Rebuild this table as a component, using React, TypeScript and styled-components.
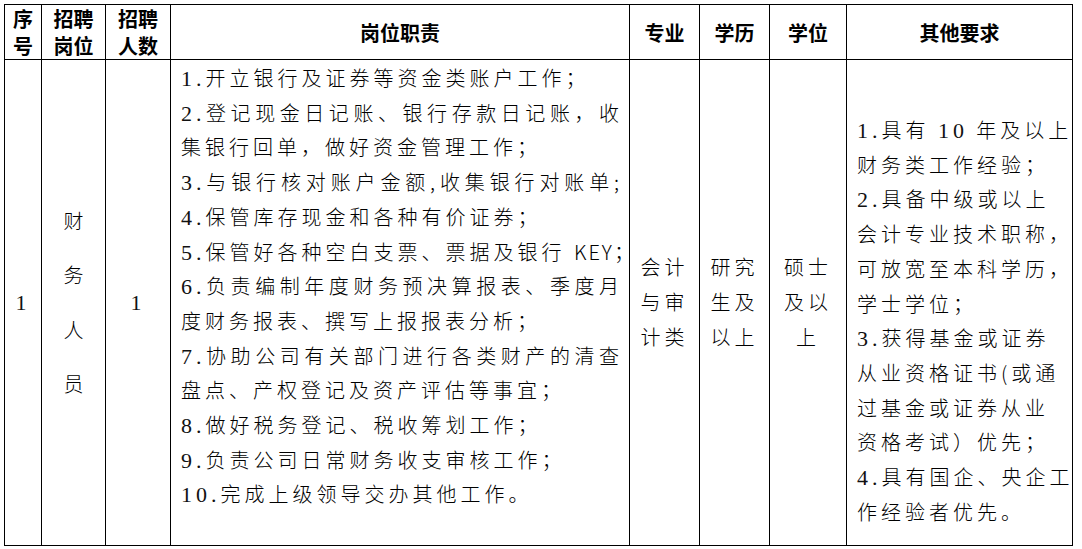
import React from 'react'
import styled, { createGlobalStyle } from 'styled-components'

const GlobalStyle = createGlobalStyle`
  * { box-sizing: border-box; }
  html, body {
    margin: 0;
    padding: 0;
    background: #fff;
  }
  body {
    font-family: "Noto Sans CJK SC", sans-serif;
    color: #000;
  }
`

const Table = styled.div`
  display: grid;
  grid-template-columns: 37px 64px 65px 459px 70px 70px 77px 226px;
  grid-template-rows: 55px 486px;
  width: max-content;
  margin: 4px 0 0 4px;
  border-top: 1px solid #000;
  border-left: 1px solid #000;
`

const Cell = styled.div<{ $top?: boolean; $pad?: string }>`
  display: flex;
  flex-direction: column;
  justify-content: ${p => (p.$top ? 'flex-start' : 'center')};
  padding: ${p => p.$pad || '0'};
  border-right: 1px solid #000;
  border-bottom: 1px solid #000;
  overflow: visible;
`

const HeadCell = styled(Cell)`
  align-items: center;
  font-size: 20px;
  font-weight: 700;
  line-height: 27px;
  text-align: center;
`

const TextBlock = styled.div<{ $center?: boolean; $lh?: number; $spacing?: number }>`
  font-size: 20px;
  font-weight: 300;
  line-height: ${p => p.$lh || 34.7}px;
  letter-spacing: ${p => (p.$spacing ?? 4)}px;
  text-align: ${p => (p.$center ? 'center' : 'left')};
`

const Line = styled.div<{ $justify?: boolean }>`
  white-space: nowrap;
  text-align-last: ${p => (p.$justify ? 'justify' : 'auto')};
`

// digits and numbering: serif, a touch larger like the original document
const Latin = styled.span`
  font-family: "Liberation Serif", serif;
  font-size: 22px;
  font-weight: 400;
  line-height: 1;
  letter-spacing: 4px;
  color: #111;
`

const Word = styled.span`
  letter-spacing: 2px;
`

const renderText = (s: string) =>
  s.split(/(\d+\.?|[A-Z]+)/).map((part, i) => {
    if (/^\d/.test(part)) return <Latin key={i}>{part}</Latin>
    if (/^[A-Z]/.test(part)) return <Word key={i}>{part}</Word>
    return <React.Fragment key={i}>{part}</React.Fragment>
  })

const duties: [string, boolean][] = [
  ['1.开立银行及证券等资金类账户工作；', false],
  ['2.登记现金日记账、银行存款日记账，收', true],
  ['集银行回单，做好资金管理工作；', false],
  ['3.与银行核对账户金额,收集银行对账单;', true],
  ['4.保管库存现金和各种有价证券；', false],
  ['5.保管好各种空白支票、票据及银行 KEY；', false],
  ['6.负责编制年度财务预决算报表、季度月', true],
  ['度财务报表、撰写上报报表分析；', false],
  ['7.协助公司有关部门进行各类财产的清查', true],
  ['盘点、产权登记及资产评估等事宜；', false],
  ['8.做好税务登记、税收筹划工作；', false],
  ['9.负责公司日常财务收支审核工作；', false],
  ['10.完成上级领导交办其他工作。', false],
]

const others = [
  '1.具有 10 年及以上',
  '财务类工作经验；',
  '2.具备中级或以上',
  '会计专业技术职称，',
  '可放宽至本科学历，',
  '学士学位；',
  '3.获得基金或证券',
  '从业资格证书(或通',
  '过基金或证券从业',
  '资格考试）优先；',
  '4.具有国企、央企工',
  '作经验者优先。',
]

const Lines = ({ items, center, lh, spacing }: { items: string[]; center?: boolean; lh?: number; spacing?: number }) => (
  <TextBlock $center={center} $lh={lh} $spacing={spacing}>
    {items.map((t, i) => (
      <Line key={i}>{renderText(t)}</Line>
    ))}
  </TextBlock>
)

export default function App() {
  return (
    <>
      <GlobalStyle />
      <Table>
        <HeadCell>序<br />号</HeadCell>
        <HeadCell>招聘<br />岗位</HeadCell>
        <HeadCell>招聘<br />人数</HeadCell>
        <HeadCell>岗位职责</HeadCell>
        <HeadCell>专业</HeadCell>
        <HeadCell>学历</HeadCell>
        <HeadCell>学位</HeadCell>
        <HeadCell>其他要求</HeadCell>

        <Cell>
          <Lines items={['1']} center spacing={0} />
        </Cell>
        <Cell>
          <Lines items={['财', '务', '人', '员']} center lh={54.5} spacing={0} />
        </Cell>
        <Cell>
          <Lines items={['1']} center spacing={0} />
        </Cell>
        <Cell $top $pad="1px 6px 0 10px">
          <TextBlock>
            {duties.map(([t, j], i) => (
              <Line key={i} $justify={j}>{renderText(t)}</Line>
            ))}
          </TextBlock>
        </Cell>
        <Cell>
          <Lines items={['会计', '与审', '计类']} center />
        </Cell>
        <Cell>
          <Lines items={['研究', '生及', '以上']} center />
        </Cell>
        <Cell>
          <Lines items={['硕士', '及以', '上']} center />
        </Cell>
        <Cell $top $pad="53px 0 0 10px">
          <Lines items={others} />
        </Cell>
      </Table>
    </>
  )
}
